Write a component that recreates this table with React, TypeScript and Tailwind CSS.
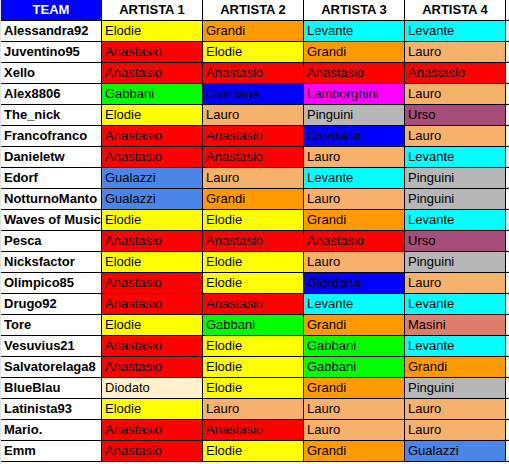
const colors: Record<string, string> = {
  Elodie: 'bg-[#ffff00]',
  Anastasio: 'bg-[#ff0000]',
  Grandi: 'bg-[#ff9900]',
  Levante: 'bg-[#00ffff]',
  Lauro: 'bg-[#f6b26b]',
  Gabbani: 'bg-[#00ff00]',
  Giordana: 'bg-[#0000ff]',
  Lamborghini: 'bg-[#ff00ff]',
  Pinguini: 'bg-[#b7b7b7]',
  Urso: 'bg-[#a64d79]',
  Gualazzi: 'bg-[#4a86e8]',
  Diodato: 'bg-[#fff2cc]',
  Masini: 'bg-[#dd7e6b]',
};

const rows: [string, string[]][] = [
  ['Alessandra92', ['Elodie', 'Grandi', 'Levante', 'Levante']],
  ['Juventino95', ['Anastasio', 'Elodie', 'Grandi', 'Lauro']],
  ['Xello', ['Anastasio', 'Anastasio', 'Anastasio', 'Anastasio']],
  ['Alex8806', ['Gabbani', 'Giordana', 'Lamborghini', 'Lauro']],
  ['The_nick', ['Elodie', 'Lauro', 'Pinguini', 'Urso']],
  ['Francofranco', ['Anastasio', 'Anastasio', 'Giordana', 'Lauro']],
  ['Danieletw', ['Anastasio', 'Anastasio', 'Lauro', 'Levante']],
  ['Edorf', ['Gualazzi', 'Lauro', 'Levante', 'Pinguini']],
  ['NotturnoManto', ['Gualazzi', 'Grandi', 'Lauro', 'Pinguini']],
  ['Waves of Music', ['Elodie', 'Elodie', 'Grandi', 'Levante']],
  ['Pesca', ['Anastasio', 'Anastasio', 'Anastasio', 'Urso']],
  ['Nicksfactor', ['Elodie', 'Elodie', 'Lauro', 'Pinguini']],
  ['Olimpico85', ['Anastasio', 'Elodie', 'Giordana', 'Lauro']],
  ['Drugo92', ['Anastasio', 'Anastasio', 'Levante', 'Levante']],
  ['Tore', ['Elodie', 'Gabbani', 'Grandi', 'Masini']],
  ['Vesuvius21', ['Anastasio', 'Elodie', 'Gabbani', 'Levante']],
  ['Salvatorelaga8', ['Anastasio', 'Elodie', 'Gabbani', 'Grandi']],
  ['BlueBlau', ['Diodato', 'Elodie', 'Grandi', 'Pinguini']],
  ['Latinista93', ['Elodie', 'Lauro', 'Lauro', 'Lauro']],
  ['Mario.', ['Anastasio', 'Anastasio', 'Lauro', 'Lauro']],
  ['Emm', ['Anastasio', 'Elodie', 'Grandi', 'Gualazzi']],
];

const cell = 'w-[101px] shrink-0 h-full border-r border-black overflow-hidden whitespace-nowrap flex items-center';

export default function App() {
  return (
    <div className="w-[509px] h-[464px] bg-white overflow-hidden font-['Liberation_Sans',Arial,sans-serif] text-[13px] text-black border-l border-[#e2e2e2]">
      <div className="flex h-[21px] border-b border-black">
        <div className={`${cell} justify-center bg-[#0000ff] text-white font-bold`}>TEAM</div>
        <div className={`${cell} justify-center font-bold`}>ARTISTA 1</div>
        <div className={`${cell} justify-center font-bold`}>ARTISTA 2</div>
        <div className={`${cell} justify-center font-bold`}>ARTISTA 3</div>
        <div className={`${cell} justify-center font-bold`}>ARTISTA 4</div>
        <div className="flex-1 h-full border-b border-[#e2e2e2]" />
      </div>

      {rows.map(([team, picks]) => (
        <div key={team} className="flex h-[21px] border-b border-black">
          <div className={`${cell} pl-[3px] font-bold`}>{team}</div>
          {picks.map((p, i) => (
            <div key={i} className={`${cell} pl-[3px] ${colors[p]}`}>
              {p}
            </div>
          ))}
          <div className="flex-1 h-full border-b border-[#e2e2e2]" />
        </div>
      ))}

      <div className="flex h-[3px]">
        {[0, 1, 2, 3, 4].map((i) => (
          <div key={i} className="w-[101px] shrink-0 h-full border-r border-[#e2e2e2]" />
        ))}
      </div>
    </div>
  );
}
